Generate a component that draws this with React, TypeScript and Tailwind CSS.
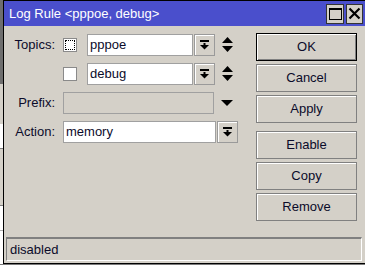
import type { ReactNode } from 'react'

const font = { fontFamily: '"Liberation Sans", Arial, sans-serif' }

function DropButton({ className = '' }: { className?: string }) {
  return (
    <div
      className={`flex h-[22px] w-[21px] shrink-0 items-center justify-center border border-[#9a9a9a] bg-[#d4d0c8] shadow-[inset_1px_1px_0_#ffffff] ${className}`}
    >
      <svg width="9" height="10" viewBox="0 0 9 10">
        <rect x="0" y="0" width="9" height="2" fill="#000" />
        <rect x="3.5" y="3" width="2" height="2" fill="#000" />
        <polygon points="0,5 9,5 4.5,9.5" fill="#000" />
      </svg>
    </div>
  )
}

function UpDown() {
  return (
    <svg width="11" height="16" viewBox="0 0 11 16" className="shrink-0">
      <polygon points="5.5,0 11,6 0,6" fill="#000" />
      <polygon points="0,9 11,9 5.5,15" fill="#000" />
    </svg>
  )
}

function Checkbox({ focused }: { focused?: boolean }) {
  return (
    <div className="flex h-[14px] w-[14px] shrink-0 items-center justify-center border border-[#8a8a8a] bg-white">
      {focused ? <div className="h-[10px] w-[10px] border border-dotted border-black" /> : null}
    </div>
  )
}

function Field({ value, className = '', disabled }: { value?: string; className?: string; disabled?: boolean }) {
  return (
    <div
      className={`flex h-[22px] shrink-0 items-center border border-[#a0a0a0] px-[2px] text-[13px] text-[#0b0b2a] ${
        disabled ? 'bg-[#d4d0c8]' : 'bg-white'
      } ${className}`}
    >
      {value}
    </div>
  )
}

function Row({ label, children }: { label?: string; children: ReactNode }) {
  return (
    <div className="flex h-[22px] items-center">
      <div className="w-[51px] shrink-0 text-right text-[13px] text-[#0b0b2a]">{label}</div>
      <div className="ml-[8px] flex items-center">{children}</div>
    </div>
  )
}

function DialogButton({ label, primary }: { label: string; primary?: boolean }) {
  return (
    <button
      className={`flex h-[28px] w-[101px] items-center justify-center border bg-[#d4d0c8] text-[13px] text-[#0b0b2a] ${
        primary
          ? 'border-black shadow-[inset_1px_1px_0_#ffffff,inset_-1px_-1px_0_#808080]'
          : 'border-[#808080] shadow-[inset_1px_1px_0_#ffffff]'
      }`}
    >
      {label}
    </button>
  )
}

export default function App() {
  return (
    <div className="flex h-[265px] w-[365px] flex-col overflow-hidden bg-[#7a7a7a]" style={font}>
      <div className="flex h-[264px]">
        <div className="flex w-[3px] shrink-0 flex-col">
          <div className="h-[84px] bg-[#6e6e6e]" />
          <div className="h-[40px] bg-[#d4d0c8]" />
          <div className="h-[24px] bg-white" />
          <div className="h-px bg-[#808080]" />
          <div className="h-[56px] bg-[#d4d0c8]" />
          <div className="h-px bg-[#808080]" />
          <div className="h-[24px] bg-white" />
          <div className="h-px bg-[#b0b0b0]" />
          <div className="flex-1 bg-white" />
        </div>

        <div className="flex flex-1 flex-col border-b border-l border-black bg-[#d4d0c8]">
          <div className="flex h-[26px] shrink-0 items-center border-t border-black bg-[#4a4fcc] pl-[5px] pr-[2px]">
            <span className="text-[13px] text-white">Log Rule &lt;pppoe, debug&gt;</span>
            <div className="ml-auto flex gap-[2px]">
              <div className="flex h-[20px] w-[18px] items-center justify-center border border-[#333] bg-[#d4d0c8]">
                <div className="h-[12px] w-[13px] border border-t-2 border-black" />
              </div>
              <div className="flex h-[20px] w-[17px] items-center justify-center border border-[#333] bg-[#d4d0c8]">
                <svg width="13" height="13" viewBox="0 0 13 13">
                  <path d="M1.5 1.5 L11.5 11.5 M11.5 1.5 L1.5 11.5" stroke="#000" strokeWidth="2.2" />
                </svg>
              </div>
            </div>
          </div>

          <div className="flex flex-1 flex-col">
            <div className="flex pt-[7px]">
              <div className="flex flex-1 flex-col gap-[7px] pt-px">
                <Row label="Topics:">
                  <Checkbox focused />
                  <Field value="pppoe" className="ml-[10px] w-[106px]" />
                  <DropButton className="ml-px" />
                  <div className="ml-[7px]">
                    <UpDown />
                  </div>
                </Row>
                <Row>
                  <Checkbox />
                  <Field value="debug" className="ml-[10px] w-[106px]" />
                  <DropButton className="ml-px" />
                  <div className="ml-[7px]">
                    <UpDown />
                  </div>
                </Row>
                <Row label="Prefix:">
                  <Field disabled className="w-[151px]" />
                  <svg width="12" height="6" viewBox="0 0 12 6" className="ml-[7px]">
                    <polygon points="0,0 12,0 6,6" fill="#000" />
                  </svg>
                </Row>
                <Row label="Action:">
                  <Field value="memory" className="w-[153px]" />
                  <DropButton className="ml-px" />
                </Row>
              </div>

              <div className="mr-[8px] flex flex-col gap-[3px]">
                <DialogButton label="OK" primary />
                <DialogButton label="Cancel" />
                <DialogButton label="Apply" />
                <div className="mt-[5px]">
                  <DialogButton label="Enable" />
                </div>
                <DialogButton label="Copy" />
                <DialogButton label="Remove" />
              </div>
            </div>

            <div className="mb-[2px] ml-[2px] mr-[3px] mt-auto flex h-[24px] items-center border-l border-t-2 border-r border-b border-[#808080] border-b-white border-r-white pl-[3px] text-[13px] text-[#0b0b2a]">
              disabled
            </div>
          </div>
        </div>
      </div>
    </div>
  )
}
